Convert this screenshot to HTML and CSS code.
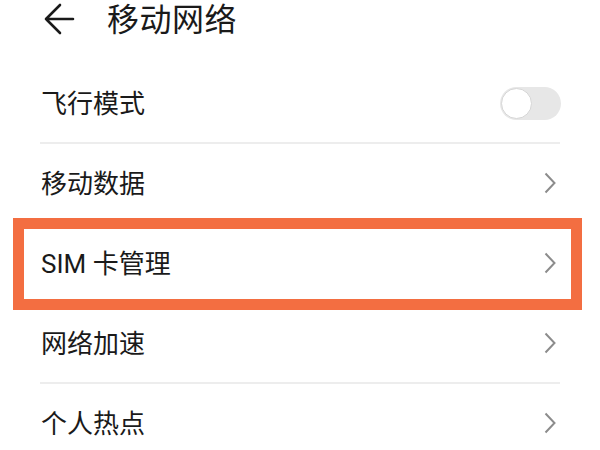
FILE: index.html
```html
<!DOCTYPE html>
<html lang="zh-CN">
<head>
<meta charset="utf-8">
<title>移动网络</title>
<link rel="stylesheet" href="styles.css">
</head>
<body>
<div class="page">
  <header class="header">
    <svg class="back" width="32" height="32" viewBox="0 0 32 32">
      <path d="M30 16 H3 M17 2 L3 16 L17 30" fill="none" stroke="#1a1a1a" stroke-width="2.6" stroke-linecap="round" stroke-linejoin="round"/>
    </svg>
    <h1 class="title">移动网络</h1>
  </header>
  <ul class="list">
    <li class="row">
      <span class="label">飞行模式</span>
      <span class="toggle"><span class="knob"></span></span>
    </li>
    <li class="row">
      <span class="label">移动数据</span>
      <svg class="chev" width="12" height="22" viewBox="0 0 12 22"><path d="M1.5 1.5 L10.5 11 L1.5 20.5" fill="none" stroke="#8c8c8c" stroke-width="2"/></svg>
    </li>
    <li class="row">
      <span class="label">SIM 卡管理</span>
      <svg class="chev" width="12" height="22" viewBox="0 0 12 22"><path d="M1.5 1.5 L10.5 11 L1.5 20.5" fill="none" stroke="#8c8c8c" stroke-width="2"/></svg>
      <span class="highlight"></span>
    </li>
    <li class="row">
      <span class="label">网络加速</span>
      <svg class="chev" width="12" height="22" viewBox="0 0 12 22"><path d="M1.5 1.5 L10.5 11 L1.5 20.5" fill="none" stroke="#8c8c8c" stroke-width="2"/></svg>
    </li>
    <li class="row">
      <span class="label">个人热点</span>
      <svg class="chev" width="12" height="22" viewBox="0 0 12 22"><path d="M1.5 1.5 L10.5 11 L1.5 20.5" fill="none" stroke="#8c8c8c" stroke-width="2"/></svg>
    </li>
  </ul>
</div>
</body>
</html>
```
FILE: styles.css
```css
html, body {
  margin: 0;
  padding: 0;
  background: #ffffff;
}
body {
  font-family: Roboto, "Noto Sans CJK SC", "Noto Sans", sans-serif;
  color: #1a1a1a;
  width: 600px;
  height: 450px;
  overflow: hidden;
}
.page {
  width: 600px;
}
.header {
  display: flex;
  align-items: center;
  height: 38px;
  padding-left: 43px;
}
.back {
  flex: none;
  margin-right: 32px;
}
.title {
  margin: 0;
  padding-top: 2px;
  font-size: 32px;
  font-weight: 400;
  line-height: 1.2;
  letter-spacing: 0.5px;
}
.list {
  list-style: none;
  margin: 26px 0 0 0;
  padding: 0 40px;
}
.row {
  position: relative;
  display: flex;
  align-items: center;
  justify-content: space-between;
  box-sizing: border-box;
  height: 80px;
  border-bottom: 2px solid #ededed;
}
.label {
  font-size: 26px;
  line-height: 1.2;
  padding-left: 1px;
  padding-top: 4px;
}
.chev {
  flex: none;
  margin-right: 4px;
}
.toggle {
  position: relative;
  display: block;
  width: 61px;
  height: 33px;
  border-radius: 17px;
  background: #e7e7e7;
  margin-right: -1px;
}
.knob {
  position: absolute;
  left: 1px;
  top: 1px;
  width: 29px;
  height: 29px;
  border-radius: 50%;
  background: #ffffff;
  border: 1px solid #d6d6d6;
}
.highlight {
  position: absolute;
  left: -27px;
  right: -22px;
  top: -6px;
  bottom: -8px;
  border: 11px solid #f36e41;
  pointer-events: none;
}
```
